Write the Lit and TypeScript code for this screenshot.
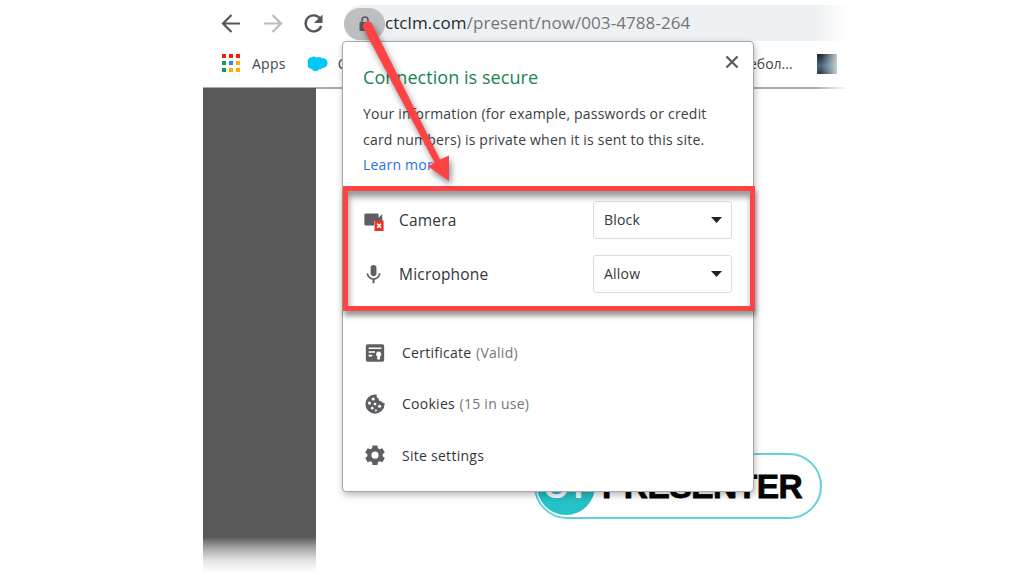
import { LitElement, html, css, svg } from "lit";
import { customElement } from "lit/decorators.js";

const GRID = ["#f21d0d", "#f21d0d", "#f21d0d", "#109d58", "#1a8cff", "#ffab00", "#109d58", "#ffab00", "#ffab00"];

@customElement("app-root")
export class AppRoot extends LitElement {
  static styles = css`
    :host {
      display: block;
      position: relative;
      width: 1028px;
      height: 575px;
      overflow: hidden;
      background: #fff;
      color: #33363b;
      font-family: "Open Sans", "Noto Sans", sans-serif;
      font-size: 14px;
      white-space: nowrap;
    }
    svg { display: block; flex: none; }
    .window { position: relative; margin-left: 203px; width: 650px; height: 575px; display: flex; flex-direction: column; }
    .toolbar { height: 41px; display: flex; padding-top: 5px; box-sizing: border-box; flex: none; }
    .nav { width: 141px; display: flex; align-items: center; box-sizing: border-box; padding-left: 17px; gap: 18px; }
    .nav svg { width: 23px; height: 23px; }
    .omnibox { flex: 1; height: 36px; display: flex; align-items: center; background: #eef1f3; border-radius: 18px 0 0 18px; }
    .lock { width: 41px; height: 32px; margin-top: 1px; border-radius: 16px; background: #bdbfc1; display: flex; align-items: center; justify-content: center; }
    .url { font-size: 17px; letter-spacing: 0.08px; line-height: 34px; color: #72767a; }
    .url b { font-weight: 400; color: #28292c; }
    .bookmarks { height: 44px; display: flex; align-items: center; padding: 0 0 2px 19px; flex: none; border-bottom: 2px solid #a9a9a9; color: #42454a; }
    .apps { display: grid; grid-template-columns: repeat(3, 4px); gap: 3px; margin-right: 12px; }
    .apps i { width: 4px; height: 4px; }
    .apps-label { letter-spacing: 0.25px; }
    .cloud { margin: 2px 10px 0 21px; }
    .hidden-mark { width: 389px; }
    .cyr { width: 66px; text-align: right; }
    .favicon { position: relative; z-index: 1; width: 20px; height: 20px; margin-top: 1px; margin-left: 24px; background: linear-gradient(90deg, rgba(255,255,255,0) 20%, rgba(225,228,230,.85)), linear-gradient(#22262c, #3f6a88 60%, #33383d); }
    .page { flex: 1; position: relative; }
    .side { width: 113px; height: 449px; margin-top: -1px; background: #595959; }
    .side-fade { width: 113px; height: 36px; background: linear-gradient(#595959, #a5a5a5 30%, #e4e4e4 65%, #fff); }
    .edge { position: absolute; right: 0; top: 0; width: 38px; height: 100px; background: linear-gradient(90deg, rgba(255,255,255,0), #fff 85%); }
    .brand { position: absolute; left: 534px; top: 453px; width: 288px; height: 66px; box-sizing: border-box; border: 2px solid #62d2d6; border-radius: 33px; display: flex; align-items: center; padding-left: 1px; color: #050505; }
    .disc { width: 58px; height: 58px; border-radius: 50%; background: #25c1c6; color: #fff; display: flex; align-items: center; justify-content: center; font: 700 34px "Liberation Sans", sans-serif; }
    .word { font: 700 33.5px/40px "Liberation Sans", sans-serif; letter-spacing: -0.5px; margin-left: 7px; margin-top: 1px; -webkit-text-stroke: 0.8px #050505; }
    .popup { position: absolute; left: 342px; top: 41px; width: 412px; height: 451px; box-sizing: border-box; padding: 22px 21px 0 20px; background: #fff; border: 1px solid #a8a8a8; border-radius: 4px; box-shadow: 1px 3px 7px rgba(0, 0, 0, 0.28); }
    .head { display: flex; justify-content: space-between; height: 28px; }
    .title { font-size: 18px; line-height: 26px; letter-spacing: 0.05px; color: #188554; }
    .close { margin: -9px -7px 0 0; }
    .info { height: 87px; margin-top: 9px; line-height: 25.7px; letter-spacing: 0.2px; color: #3a3d42; }
    .info span { display: block; }
    .link { color: #2672e3; }
    .perms { padding-top: 13px; }
    .perm { display: flex; align-items: center; height: 38px; margin-bottom: 16px; }
    .perm svg.ico { width: 22px; height: 22px; margin-right: 14px; }
    .name { flex: 1; font-size: 15.5px; letter-spacing: 0.2px; }
    .select { width: 139px; height: 38px; box-sizing: border-box; border: 1px solid #d9dde2; border-radius: 3px; padding: 0 9px 1px 10px; letter-spacing: 0.2px; display: flex; align-items: center; justify-content: space-between; }
    .select svg { margin-top: 1px; }
    .rows { margin-top: 34px; letter-spacing: 0.27px; }
    .row { display: flex; align-items: center; height: 51.3px; }
    .row svg { width: 22px; height: 22px; margin-right: 16px; margin-left: 1px; }
    .dim { color: #74777b; margin-left: 4.5px; }
    .highlight { position: absolute; left: 343px; top: 186px; width: 412px; height: 125px; box-sizing: border-box; border: 5px solid #fd4343; box-shadow: 1px 5px 5px rgba(0,0,0,.4), inset 1px 6px 6px rgba(0,0,0,.4); }
    .arrow { position: absolute; left: 350px; top: 10px; }
    .arrow path { filter: drop-shadow(2px 4px 3px rgba(0,0,0,.45)); }
  `;

  private row(icon: unknown, label: string, note = "") {
    return html`<div class="row">
      <svg viewBox="0 0 24 24" fill="#5d5f62">${icon}</svg>
      <span class="label">${label}</span>${note ? html`<span class="dim">${note}</span>` : ""}
    </div>`;
  }

  private perm(icon: unknown, label: string, value: string) {
    return html`<div class="perm">
      <svg class="ico" viewBox="0 0 24 24" fill="#5d5f62">${icon}</svg>
      <span class="name">${label}</span>
      <div class="select"><span>${value}</span>
        <svg width="11" height="6" viewBox="0 0 11 6"><path d="M0 0H11L5.5 6Z" fill="#222" /></svg>
      </div>
    </div>`;
  }

  render() {
    const camera = svg`<path d="M3 5h13a1 1 0 0 1 1 1v3.500l4-4V13H12v5H3a1.500 1.500 0 0 1-1.500-1.500v-10A1.500 1.500 0 0 1 3 5z"/>
      <rect x="12.500" y="12.500" width="10" height="11.500" fill="#e8352b"/><path d="M15.500 16l4 4.500M19.500 16l-4 4.500" stroke="#fff" stroke-width="1.700"/>`;
    const mic = svg`<path d="M11.500 14.500c1.800 0 3.200-1.400 3.200-3.200V5.500a3.200 3.200 0 0 0-6.400 0v5.800c0 1.800 1.400 3.200 3.200 3.200z"/><path d="M17.200 11.300c0 3.200-2.700 5.400-5.700 5.400s-5.700-2.200-5.700-5.400H4c0 3.600 2.900 6.600 6.400 7.100V22h2.200v-3.600c3.500-.5 6.400-3.500 6.400-7.100z"/>`;
    const cert = svg`<path fill-rule="evenodd" d="M4 2.500h16a2 2 0 0 1 2 2v15a2 2 0 0 1-2 2H4a2 2 0 0 1-2-2v-15a2 2 0 0 1 2-2zM5 6v1.700h14V6zM5 10v1.700h7V10zM5 14v1.700h4V14zM16 10.500a2.800 2.800 0 0 0-1.500 5.200V19h3v-3.300A2.800 2.800 0 0 0 16 10.500z"/>`;
    const cookie = svg`<path d="M12 1.500a10.500 10.500 0 1 0 10.500 10.500c0-.5 0-1-.1-1.400-1.500.6-3-.2-3.300-1.600-2 .3-3.400-1.100-3.100-3-1.800-.1-2.700-2-2-4.300-.7-.2-1.300-.2-2-.2z"/>
      <g fill="#fff"><circle cx="10" cy="6.500" r="1.700"/><circle cx="6" cy="11" r="1.700"/><circle cx="12" cy="12" r="1.500"/><circle cx="9" cy="16.500" r="1.500"/><circle cx="17" cy="14.500" r="1.700"/><circle cx="13" cy="19" r="1.100"/></g>`;
    const gear = svg`<path fill-rule="evenodd" d="M9.300 1.500h5.400l.5 3 1.900 1.100 2.900-1.100 2.700 4.700-2.400 1.900v2.200l2.400 1.900-2.700 4.700-2.900-1.100-1.900 1.100-.5 3H9.300l-.5-3-1.900-1.100L4 19.900l-2.700-4.700 2.400-1.900v-2.200L1.300 9.200 4 4.500l2.900 1.100 1.900-1.100zM12 8.300a3.900 3.900 0 1 0 0 7.800 3.900 3.900 0 0 0 0-7.800z"/>`;

    return html`
      <div class="window">
        <div class="toolbar">
          <div class="nav">
            <svg viewBox="0 0 23 23" fill="none" stroke="#54575b" stroke-width="2.200"><path d="M20 11.500H3.500M11.500 3L3 11.500l8.500 8.500" /></svg>
            <svg viewBox="0 0 23 23" fill="none" stroke="#b9bbbd" stroke-width="2.200"><path d="M3 11.500h16.500M11.500 3l8.500 8.500-8.500 8.500" /></svg>
            <svg viewBox="0 0 23 23"><path d="M18 6.500A8 8 0 1 0 19.200 14" fill="none" stroke="#54575b" stroke-width="2.400" /><path d="M20.500 2.500v8.500H12z" fill="#54575b" /></svg>
          </div>
          <div class="omnibox">
            <div class="lock"><svg width="12" height="16" viewBox="0 0 12 16"><path d="M3 6V4a3 3 0 0 1 6 0v2" fill="none" stroke="#55585b" stroke-width="1.600" /><rect x="0.500" y="6" width="11" height="9" rx="1" fill="#55585b" /></svg></div>
            <span class="url"><b>ctclm.com</b>/present/now/003-4788-264</span>
          </div>
        </div>
        <div class="bookmarks">
          <div class="apps">${GRID.map((c) => html`<i style="background:${c}"></i>`)}</div>
          <span class="apps-label">Apps</span>
          <svg class="cloud" width="21" height="16" viewBox="0 0 21 16"><path d="M4 1.500C6 0 8 .5 9.500 1.700c2-1.200 4-1 5.500.6C18 2 21 4 20.500 7.500 20.500 10 18 12 15.500 11.800c-1 1.500-2 1.700-3.500 1.500-1.500 2.700-6 2.500-7-.3C1.500 13 0 10 1.200 8 0 5 1 2 4 1.500z" fill="#00c8f8" /></svg>
          <span class="hidden-mark">C</span>
          <span class="cyr">ебол...</span>
          <div class="favicon"></div>
        </div>
        <div class="page"><div class="side"></div><div class="side-fade"></div></div>
        <div class="edge"></div>
      </div>
      <div class="brand"><div class="disc">CT</div><span class="word">PRESENTER</span></div>
      <div class="popup">
        <div class="head"><span class="title">Connection is secure</span>
          <svg class="close" width="14" height="14" viewBox="0 0 14 14"><path d="M1.500 1.500l11 11M12.500 1.500l-11 11" stroke="#5b5e62" stroke-width="2.300" /></svg>
        </div>
        <div class="info"><span>Your information (for example, passwords or credit</span><span>card numbers) is private when it is sent to this site.</span><span class="link">Learn more</span></div>
        <div class="perms">${this.perm(camera, "Camera", "Block")}${this.perm(mic, "Microphone", "Allow")}</div>
        <div class="rows">${this.row(cert, "Certificate", "(Valid)")}${this.row(cookie, "Cookies", "(15 in use)")}${this.row(gear, "Site settings")}</div>
      </div>
      <div class="highlight"></div>
      <svg class="arrow" width="120" height="190" viewBox="350 10 120 190">
        <path d="M363 27.500A5 5 0 0 1 371.500 23L440 159.500 449 155.500V181L428 166.500 434.500 162.500Z" fill="#fd4343" />
      </svg>`;
  }
}
